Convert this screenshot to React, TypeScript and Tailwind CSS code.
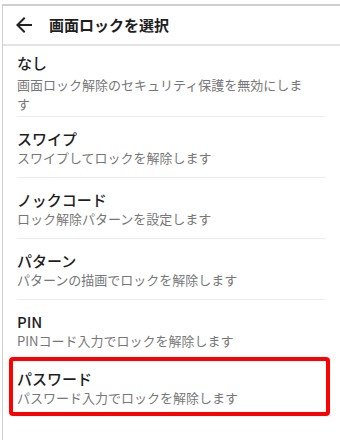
const options = [
  { title: "スワイプ", desc: "スワイプしてロックを解除します" },
  { title: "ノックコード", desc: "ロック解除パターンを設定します" },
  { title: "パターン", desc: "パターンの描画でロックを解除します" },
];

function BackArrow() {
  return (
    <svg viewBox="0 0 24 24" className="h-6 w-6 fill-[#222]" aria-hidden>
      <path d="M20 11H7.83l5.59-5.59L12 4l-8 8 8 8 1.41-1.41L7.83 13H20v-2z" />
    </svg>
  );
}

export default function App() {
  return (
    <div
      className="h-[440px] w-[340px] overflow-hidden bg-white pl-[2px] pt-[4px]"
      style={{ fontFamily: '"Noto Sans CJK JP", "Noto Sans", sans-serif' }}
    >
      <div className="flex h-full flex-col border-l border-t-2 border-[#cfcfcf]">
        <header className="flex h-[40px] shrink-0 items-center gap-[13px] border-b-2 border-[#e2e2e2] pl-[9px]">
          <BackArrow />
          <h1 className="text-[15px] font-bold leading-5 text-[#1e1e1e]">
            画面ロックを選択
          </h1>
        </header>

        <ul className="pl-[14px] pr-[15px]">
          <li className="border-b border-[#ececec] pb-[3px] pt-[7px]">
            <p className="text-[15px] font-medium leading-5 text-[#1e1e1e]">なし</p>
            <p className="mt-[2px] w-[292px] text-[13px] leading-[19px] text-[#777]">
              画面ロック解除のセキュリティ保護を無効にします
            </p>
          </li>
          {options.map((o) => (
            <li key={o.title} className="border-b border-[#ececec] pb-[10px] pt-[12px]">
              <p className="text-[15px] font-medium leading-5 text-[#1e1e1e]">{o.title}</p>
              <p className="text-[13px] leading-[18px] text-[#777]">{o.desc}</p>
            </li>
          ))}
          <li className="pb-[7px] pt-[12px]">
            <p className="text-[15px] font-medium leading-5 text-[#1e1e1e]">PIN</p>
            <p className="text-[13px] leading-[18px] text-[#777]">
              PINコード入力でロックを解除します
            </p>
          </li>
          <li className="-ml-[8px] -mr-[5px] rounded-[4px] border-4 border-[#ff0000] pb-[5px] pl-[4px] pt-[8px]">
            <p className="text-[15px] font-medium leading-5 text-[#1e1e1e]">パスワード</p>
            <p className="text-[13px] leading-[18px] text-[#777]">
              パスワード入力でロックを解除します
            </p>
          </li>
        </ul>
      </div>
    </div>
  );
}
